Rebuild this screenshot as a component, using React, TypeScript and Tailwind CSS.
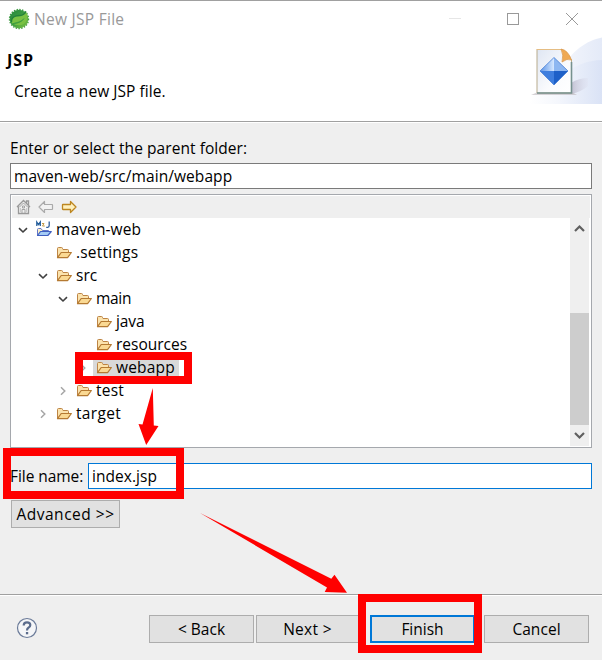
import type { ReactNode } from 'react';

function Folder() {
  return (
    <svg width="16" height="16" viewBox="0 0 16 16" className="shrink-0">
      <path d="M1.5 12.5V3.5Q1.5 2.5 2.5 2.5H5.5Q6.5 2.5 6.5 3.5L7 4.5H11.5Q12.5 4.5 12.5 5.5V8" fill="#fbe3ad" stroke="#bd8444" />
      <path d="M1.5 12.7L5.2 7.5H15.4L11.8 12.3Q11.5 12.7 11 12.7Z" fill="#fad993" stroke="#b57a32" strokeWidth="1.2" strokeLinejoin="round" />
    </svg>
  );
}

function MavenProject() {
  return (
    <svg width="16" height="16" viewBox="0 0 16 16" className="shrink-0 overflow-visible">
      <path d="M1.5 13.5V7.5Q1.5 6.5 2.5 6.5H5L6.5 8.5H12.5V10" fill="#fdf1c4" stroke="#6276c8" />
      <path d="M1.5 13.5L4.5 9.5H15.3L11.8 13.5Z" fill="#a5ccf5" stroke="#3f5fc0" strokeWidth="1.2" strokeLinejoin="round" />
      <path d="M.8 4V0L2.5 2.5L4.3 0V4" fill="none" stroke="#235d9b" strokeWidth="1.3" />
      <path d="M6 1.5H8L6.5 4H8.8" fill="none" stroke="#c39a45" />
      <path d="M13.2 -.5V3.500Q13.200 5.300 11.800 5.300H10.200" fill="none" stroke="#315f9b" strokeWidth="1.3" />
    </svg>
  );
}

function Chevron({ open }: { open: boolean }) {
  return (
    <svg width="10" height="10" viewBox="0 0 10 10" className="shrink-0">
      {open ? (
        <path d="M1 3.2L5 7L9 3.2" fill="none" stroke="#404040" strokeWidth="1.6" />
      ) : (
        <path d="M3 1.2L6.8 5L3 8.8" fill="none" stroke="#a6a6a6" strokeWidth="1.5" />
      )}
    </svg>
  );
}

type RowProps = {
  name: string;
  indent: string;
  tracking?: string;
  open?: boolean;
  leaf?: boolean;
  project?: boolean;
  selected?: boolean;
};

function Row({ name, indent, tracking = '', open = false, leaf, project, selected }: RowProps) {
  return (
    <div className={`flex h-[23px] items-center ${indent}`}>
      <span className="flex w-[10px] shrink-0">{!leaf && <Chevron open={open} />}</span>
      <span className={`ml-[5px] flex h-[23px] items-center gap-[4px] pr-1 pl-[3px] ${selected ? 'bg-[#d9d9d9]' : ''}`}>
        {project ? <MavenProject /> : <Folder />}
        <span className={`pb-px leading-[21px] ${tracking}`}>{name}</span>
      </span>
    </div>
  );
}

function Button({ children, className }: { children: ReactNode; className: string }) {
  return (
    <button className={`flex h-[28px] shrink-0 items-center justify-center bg-[#e1e1e1] whitespace-pre ${className}`}>
      <span className="relative top-px">{children}</span>
    </button>
  );
}

function SpringLogo() {
  return (
    <svg width="22" height="22" viewBox="0 0 22 22" className="shrink-0">
      <defs>
        <linearGradient id="leafGreen" x1="0" y1="0" x2="1" y2="1">
          <stop offset="0" stopColor="#23853d" />
          <stop offset=".45" stopColor="#399b40" />
          <stop offset="1" stopColor="#80c342" />
        </linearGradient>
      </defs>
      <circle cx="11" cy="11" r="9.5" fill="none" stroke="#3c9a3e" strokeWidth="1.4" strokeDasharray="1.4 1.4" />
      <circle cx="11" cy="11" r="9.3" fill="url(#leafGreen)" />
      <path d="M4 15.500C3 10 7 8.200 11 8.300C15 8.300 17 6 18 3.500C20.5 9 19.5 13 16.500 15.400C13 18 8 17.600 5 15.600C10 15.5 14 13.7 16 10.5C13 13 9 14.3 4 15.500Z" fill="#79c143" />
      <path d="M3.500 14C3 9.500 7 7.500 11 7.500C15 7.500 17 5.500 18 3.500" fill="none" stroke="#23803a" strokeWidth="1.300" />
      <path d="M5 15.600C10 15.500 14 13.700 16 10.500" fill="none" stroke="#3a9a40" strokeWidth=".9" />
    </svg>
  );
}

function Banner() {
  return (
    <svg width="72" height="68" viewBox="530 36 72 68" className="-mt-px shrink-0">
      <defs>
        <linearGradient id="sweep" x1="0" y1="0" x2="1" y2="0">
          <stop offset="0" stopColor="#fff" />
          <stop offset="1" stopColor="#e4eaf8" />
        </linearGradient>
        <linearGradient id="sweepInner" x1="0" y1="0" x2="1" y2="0">
          <stop offset="0" stopColor="#f2f5fc" />
          <stop offset="1" stopColor="#d8e1f5" />
        </linearGradient>
        <linearGradient id="castShadow" x1="0" y1="0" x2="1" y2="0">
          <stop offset="0" stopColor="#aaa6bb" />
          <stop offset="1" stopColor="#dcdcec" stopOpacity=".4" />
        </linearGradient>
        <linearGradient id="sheet" x1="0" y1="0" x2="1" y2="1">
          <stop offset="0" stopColor="#dfe6f3" />
          <stop offset=".6" stopColor="#fafbfd" />
          <stop offset="1" stopColor="#fff" />
        </linearGradient>
        <linearGradient id="gemLeft" x1="0" y1="0" x2="1" y2="0">
          <stop offset="0" stopColor="#5b93e6" />
          <stop offset="1" stopColor="#d6e8ff" />
        </linearGradient>
      </defs>
      <path d="M530 104V98L560 72C572 50 586 41 602 37.500V104Z" fill="url(#sweep)" />
      <path d="M560 104V78C572 66 588 60 602 60V104Z" fill="url(#sweepInner)" opacity=".85" />
      <path d="M571 94V83Q579 78 588 78V86Q581 92 571 94Z" fill="url(#castShadow)" opacity=".65" />
      <path d="M531 95L538 92H572L577 95H531Z" fill="#bdb6bb" opacity=".6" />
      <path d="M537 49.500H562L571.500 60V93H537Z" fill="url(#sheet)" stroke="#b8ab8c" />
      <path d="M536.500 49.500H562" stroke="#e5bd83" />
      <path d="M571.500 62V93H537" fill="none" stroke="#76918f" strokeWidth="1.600" />
      <path d="M561 49Q568 50 571.500 60Q567 58 562 62Q564 55 561 49Z" fill="#efa954" stroke="#d99547" strokeWidth=".7" />
      <path d="M554 57.500L540 71H554Z" fill="url(#gemLeft)" />
      <path d="M554 57.500L568 71H554Z" fill="#8db7f1" />
      <path d="M540 71L554 85V71Z" fill="#3e7ede" />
      <path d="M568 71L554 85V71Z" fill="#1d60c8" />
      <path d="M554 57.500L568 71L554 85L540 71Z" fill="none" stroke="#477fd4" strokeWidth=".8" />
    </svg>
  );
}

export default function App() {
  return (
    <div className="relative flex h-[660px] w-[602px] flex-col overflow-hidden bg-[#efefef] font-['Open_Sans','Noto_Sans',sans-serif] text-[15.5px] text-black">
      <header className="flex h-[122px] shrink-0 flex-col border-t border-b border-t-[#a0a0a0] border-b-[#a0a0a0] bg-white">
        <div className="flex h-[36px] shrink-0 items-center pl-2">
          <SpringLogo />
          <span className="ml-[4px] pt-[2px] tracking-[0.28px] text-[#999]">New JSP File</span>
          <svg width="153" height="20" viewBox="440 9 153 20" className="ml-auto">
            <path d="M449 18.500H461" stroke="#e6e6e6" />
            <rect x="507.500" y="13.500" width="11" height="11" fill="none" stroke="#999" />
            <path d="M566 13L578 25M578 13L566 25" stroke="#999" fill="none" />
          </svg>
          <span className="w-[9px]" />
        </div>
        <div className="flex justify-between">
          <div className="pl-[7px]">
            <h1 className="mt-[11px] text-[16px] leading-6 font-bold tracking-[0.9px]">JSP</h1>
            <p className="mt-[7px] ml-[7px] leading-6 tracking-[0.06px]">Create a new JSP file.</p>
          </div>
          <Banner />
        </div>
      </header>
      <main className="flex h-[472px] shrink-0 flex-col border-t border-white pr-[10px] pl-[10px]">
        <label className="mt-[13px] h-[27px] leading-6 tracking-[0.06px]">Enter or select the parent folder:</label>
        <div className="flex h-[26px] shrink-0 items-center border border-[#7a7a7a] bg-white pl-[3px] tracking-[0.07px]">
          <span className="relative top-px">maven-web/src/main/webapp</span>
        </div>
        <section className="mt-[5px] flex h-[254px] shrink-0 flex-col border border-[#a5a8ad] bg-white p-px">
          <div className="flex h-[22px] shrink-0 items-center gap-[7px] bg-[#efefef] pl-[4px]">
            <svg width="15" height="16" viewBox="0 0 15 16">
              <path d="M1 8L7.500 1.500L14 8M10.500 4V2H12.500V6M2.500 7.500V14.500H12.500V7.500" fill="none" stroke="#999" strokeWidth="1.300" />
              <path d="M3.500 8L7.500 4L11.500 8M6.500 7H8.500V9H6.500ZM6 14V10.500H9V14M4 10H5M10 10H11M4 12H5M10 12H11" fill="none" stroke="#a5a5a5" />
            </svg>
            <svg width="16" height="14" viewBox="0 0 16 14">
              <path d="M1 7L6.500 1.500V4.500H14Q14.500 4.500 14.500 5V9Q14.500 9.500 14 9.500H6.500V12.500Z" fill="#f2f2f2" stroke="#aaa" strokeWidth="1.200" strokeLinejoin="round" />
            </svg>
            <svg width="16" height="14" viewBox="0 0 16 14">
              <path d="M15 7L9.500 1.500V4.500H2Q1.500 4.500 1.500 5V9Q1.500 9.500 2 9.500H9.500V12.500Z" fill="#fff0bd" stroke="#bd861f" strokeWidth="1.300" strokeLinejoin="round" />
            </svg>
          </div>
          <div className="flex h-[228px]">
            <div className="grow">
              <Row name="maven-web" indent="pl-[6px]" tracking="tracking-[0.12px]" open project />
              <Row name=".settings" indent="pl-[26px]" tracking="tracking-[0.2px]" leaf />
              <Row name="src" indent="pl-[26px]" open />
              <Row name="main" indent="pl-[46px]" tracking="tracking-[-0.3px]" open />
              <Row name="java" indent="pl-[66px]" tracking="tracking-[-0.1px]" leaf />
              <Row name="resources" indent="pl-[66px]" leaf />
              <Row name="webapp" indent="pl-[66px]" tracking="tracking-[0.2px]" selected />
              <Row name="test" indent="pl-[46px]" tracking="tracking-[0.25px]" />
              <Row name="target" indent="pl-[26px]" tracking="tracking-[0.35px]" />
            </div>
            <div className="mr-px flex w-[19px] flex-col items-center bg-[#efefef]">
              <svg width="19" height="95" viewBox="0 0 19 95">
                <path d="M5 13L9.500 8.500L14 13" fill="none" stroke="#606060" strokeWidth="2.200" />
              </svg>
              <div className="h-[112px] w-full bg-[#cdcdcd]" />
              <svg width="19" height="21" viewBox="0 0 19 21">
                <path d="M5 8L9.500 12.500L14 8" fill="none" stroke="#606060" strokeWidth="2.200" />
              </svg>
            </div>
          </div>
        </section>
        <div className="mt-[15px] flex h-[26px] shrink-0">
          <label className="w-[78px] leading-[27px] whitespace-nowrap tracking-[-0.05px]">File name:</label>
          <div className="flex grow items-center border border-[#0078d7] bg-white pl-[3px]">
            <span className="relative top-px tracking-[0.05px]">index.jsp</span>
          </div>
        </div>
        <Button className="mt-[11px] ml-px w-[109px] border border-[#adadad] tracking-[0.5px]">{'Advanced >>'}</Button>
      </main>
      <footer className="flex grow border-t border-[#a0a0a0]">
        <div className="flex grow border-t border-white pt-[19px] pl-[16px]">
          <svg width="22" height="22" viewBox="0 0 22 22" className="mt-[2px]">
            <circle cx="11" cy="11" r="9.500" fill="#f5f6f8" stroke="#6b7b99" strokeWidth="1.200" />
            <path d="M7.700 8.500Q7.700 5.300 11 5.300Q14.300 5.300 14.300 8Q14.300 9.700 12.400 10.700Q11 11.500 11 13.400" fill="none" stroke="#5b6c8c" strokeWidth="2.200" />
            <rect x="9.900" y="15" width="2.300" height="2.300" fill="#5b6c8c" />
          </svg>
          <Button className="ml-[111px] w-[105px] border border-[#adadad]">{'< Back'}</Button>
          <Button className="ml-[2px] w-[105px] border border-[#adadad] pr-[2px] tracking-[0.3px]">{'Next >'}</Button>
          <Button className="ml-[9px] w-[105px] border-2 border-[#0078d7]">Finish</Button>
          <Button className="ml-[9px] w-[105px] border border-[#adadad] tracking-[0.05px]">Cancel</Button>
        </div>
      </footer>
      <div className="absolute top-[352px] left-[75px] h-[32px] w-[117px] border-8 border-[#f00]" />
      <div className="absolute top-[448px] left-[3px] h-[51px] w-[181px] border-8 border-[#f00]" />
      <div className="absolute top-[594px] left-[358px] h-[59px] w-[124px] border-8 border-[#f00]" />
      <svg width="602" height="660" viewBox="0 0 602 660" className="pointer-events-none absolute top-0 left-0" fill="#f00">
        <path d="M152.800 388L153.800 425.500L158.500 426L146.200 445L138.500 424L142.500 424.500Z" />
        <path d="M200 513L331.300 578.800L334.500 574.800L347 592.800L324.700 592L327 587.500Z" />
      </svg>
    </div>
  );
}
